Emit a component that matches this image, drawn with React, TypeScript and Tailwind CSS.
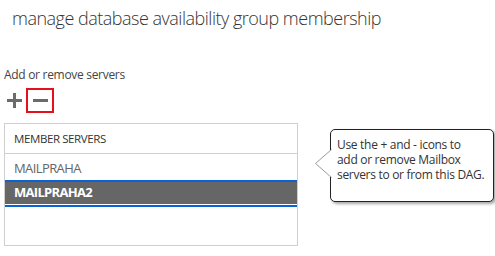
import React from 'react';

const font = { fontFamily: '"Open Sans", "Noto Sans", sans-serif' };

const PlusIcon = () => (
    <svg width="15" height="15" viewBox="0 0 15 15" className="block">
        <rect x="0" y="6" width="15" height="3" fill="#6b6b6b" />
        <rect x="6" y="0" width="3" height="15" fill="#6b6b6b" />
    </svg>
);

const MinusIcon = () => (
    <svg width="15" height="3" viewBox="0 0 15 3" className="block">
        <rect x="0" y="0" width="15" height="3" fill="#6b6b6b" />
    </svg>
);

const Tooltip: React.FC = () => (
    <div className="absolute left-[315px] top-[129px]">
        <svg width="17" height="30" viewBox="0 0 17 30" className="absolute left-0 top-[20px] z-10">
            <polyline points="16.5,0.5 0.5,14.5 16.5,28.5" fill="#ffffff" stroke="#9a9a9a" strokeWidth="1" />
        </svg>
        <div className="ml-[15px] w-[164px] h-[73px] bg-white border border-[#222] rounded-[5px] shadow-[2px_2px_3px_rgba(0,0,0,0.35)] pl-[6px] pt-[7px] text-[12px] leading-[15px] tracking-[-0.3px] text-[#333] whitespace-nowrap">
            <div>Use the + and - icons to</div>
            <div>add or remove Mailbox</div>
            <div>servers to or from this DAG.</div>
        </div>
    </div>
);

export default function App() {
    return (
        <div className="relative w-[495px] h-[256px] bg-white overflow-hidden" style={font}>
            <div className="pl-[12px] pt-[5px] text-[18px] leading-[26px] font-light tracking-[-0.5px] text-[#333]">
                manage database availability group membership
            </div>

            <div className="pl-[4px] mt-[36px] text-[12px] leading-[16px] tracking-[-0.3px] text-[#444]">
                Add or remove servers
            </div>

            <div className="flex items-center pl-[7px] mt-[5px] h-[25px]">
                <PlusIcon />
                <div className="ml-[4px] w-[28px] h-[25px] border-2 border-[#e3101e] flex items-center justify-center">
                    <MinusIcon />
                </div>
            </div>

            <div className="ml-[4px] mt-[10px] w-[294px] h-[123px] border border-[#cfcfcf]">
                <div className="h-[30px] border-b border-[#cfcfcf] flex items-center pl-[9px] text-[11.5px] tracking-[-0.4px] text-[#333]">
                    MEMBER SERVERS
                </div>
                <div className="pt-[3px]">
                    <div className="h-[23px] flex items-center pl-[9px] text-[13px] tracking-[-0.6px] text-[#666]">MAILPRAHA</div>
                    <div className="border-y-2 border-[#0a63d6]">
                        <div className="h-[22px] mb-[1px] bg-[#666] flex items-center pl-[9px] text-[13px] font-bold tracking-[-0.7px] text-white">
                            MAILPRAHA2
                        </div>
                    </div>
                </div>
            </div>

            <Tooltip />
        </div>
    );
}
